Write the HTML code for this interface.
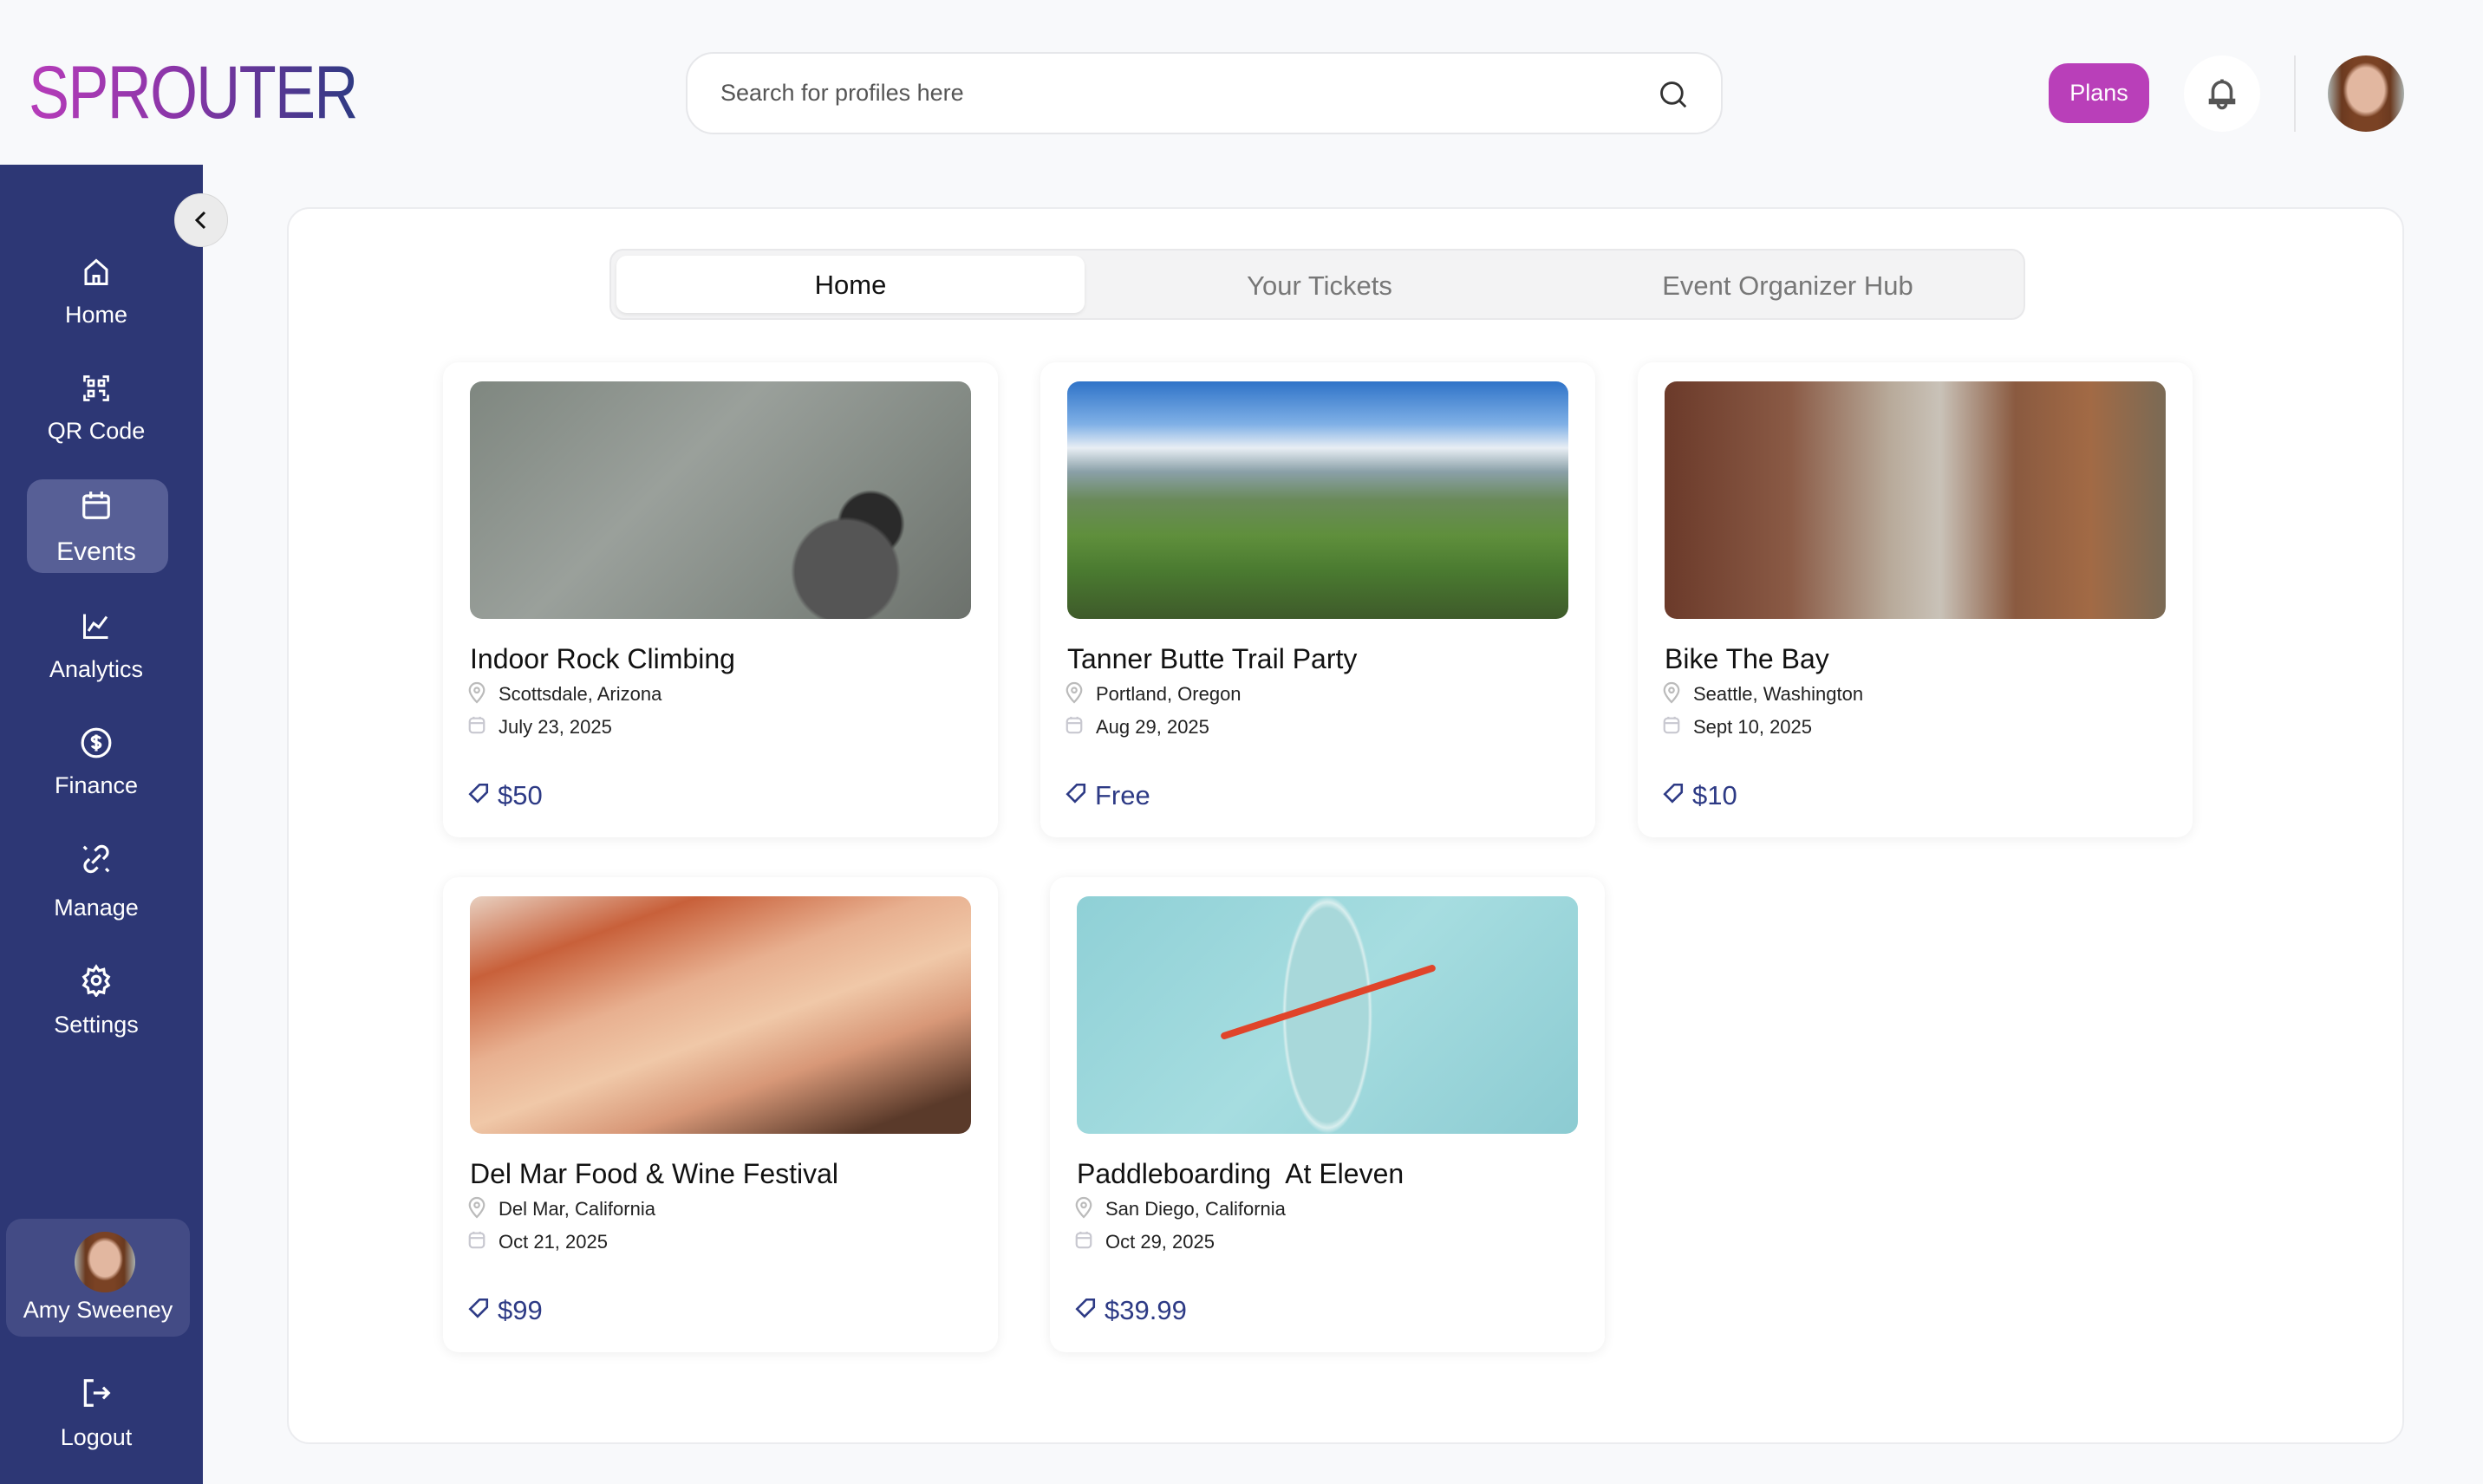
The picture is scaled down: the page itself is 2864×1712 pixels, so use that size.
<!DOCTYPE html>
<html><head><meta charset="utf-8"><style>
*{box-sizing:border-box;margin:0;padding:0}
body{width:2864px;height:1712px;background:#f8f9fb;font-family:"Liberation Sans",sans-serif;position:relative;overflow:hidden;color:#111}
.abs{position:absolute}
.logo{left:33px;top:64px;font-size:86px;font-weight:400;letter-spacing:-2px;transform:scaleX(0.82);transform-origin:left;background:linear-gradient(90deg,#b63cb9,#8a35a8 45%,#2e3a82);-webkit-background-clip:text;color:transparent;line-height:1}
.search{left:791px;top:60px;width:1196px;height:95px;background:#fff;border:2px solid #e6e7ea;border-radius:32px}
.search span{position:absolute;left:38px;top:30px;font-size:27px;color:#555}
.plans{left:2363px;top:73px;width:116px;height:69px;background:#b93fb9;border-radius:22px;color:#fff;font-size:27px;text-align:center;line-height:69px}
.bell{left:2519px;top:64px;width:88px;height:88px;border-radius:50%;background:#fff}
.avatar{border-radius:50%;background:radial-gradient(ellipse 30% 36% at 50% 45%,#e2b7a0 0 80%,transparent 100%),linear-gradient(90deg,#a9b0ad 0,#6b3a20 18%,#7a4224 35%,#7a4224 65%,#6b3a20 82%,#a9b0ad)}
.side{left:0;top:190px;width:234px;height:1522px;background:#2d3775}
.nav{position:absolute;left:0;width:222px;text-align:center;color:#fff;font-size:27px}
.nav svg{display:block;margin:0 auto}
.collapse{left:201px;top:223px;width:62px;height:62px;border-radius:50%;background:#ebebeb;border:1px solid #d8d8d8}
.panel{left:331px;top:239px;width:2442px;height:1427px;background:#fff;border:2px solid #ebecef;border-radius:26px}
.tabs{left:703px;top:287px;width:1633px;height:82px;background:#f3f3f4;border:2px solid #e8e8ea;border-radius:16px}
.tab{position:absolute;top:0;width:540px;height:80px;line-height:82px;text-align:center;font-size:31px;color:#777}
.tabon{left:6px;top:6px;height:66px;line-height:68px;background:#fff;border-radius:12px;color:#111;box-shadow:0 2px 4px rgba(0,0,0,.08)}
.card{position:absolute;width:640px;height:548px;background:#fff;border-radius:18px;box-shadow:0 2px 14px rgba(0,0,0,.07)}
.img{position:absolute;left:31px;top:22px;width:578px;height:274px;border-radius:14px;overflow:hidden}
.t{position:absolute;left:31px;top:324px;font-size:32px;color:#111}
.m{position:absolute;left:64px;font-size:22px;color:#222}
.ic{position:absolute;left:28px}
.p{position:absolute;left:63px;top:482px;font-size:31px;color:#2d3a85}
</style></head><body>
<div class="abs logo">SPROUTER</div>
<div class="abs search"><span>Search for profiles here</span>
<svg class="abs" style="left:1118px;top:28px" width="38" height="38" viewBox="0 0 24 24" fill="none" stroke="#333" stroke-width="1.8"><circle cx="11" cy="11" r="7.5"/><path d="M16.5 16.5L21 21"/></svg></div>
<div class="abs plans">Plans</div>
<div class="abs bell"><svg class="abs" style="left:26px;top:24px" width="36" height="40" viewBox="0 0 24 26" fill="none" stroke="#555" stroke-width="2.4"><path d="M12 2v2M5 18V11a7 7 0 0 1 14 0v7M3 18h18v2H3zM9 21a3 3 0 0 0 6 0"/></svg></div>
<div class="abs" style="left:2646px;top:64px;width:2px;height:88px;background:#e4e4e6"></div>
<div class="abs avatar" style="left:2685px;top:64px;width:88px;height:88px"></div>

<div class="abs side">
<div class="nav" style="top:106px"><svg width="36" height="36" viewBox="0 0 24 24" fill="none" stroke="#fff" stroke-width="2"><path d="M4 21V10l8-7 8 7v11zM10 21v-6h4v6"/></svg><div style="margin-top:16px">Home</div></div>
<div class="nav" style="top:240px"><svg width="36" height="36" viewBox="0 0 24 24" fill="none" stroke="#fff" stroke-width="1.8"><path d="M3 7V3h4M17 3h4v4M21 17v4h-4M7 21H3v-4"/><rect x="6" y="6" width="4" height="4"/><rect x="14" y="6" width="4" height="4"/><rect x="6" y="14" width="4" height="4"/><path d="M14 14h4v4"/></svg><div style="margin-top:16px">QR Code</div></div>
<div class="abs" style="left:31px;top:363px;width:163px;height:108px;background:#575f96;border-radius:18px"></div>
<div class="nav" style="top:374px"><svg width="38" height="38" viewBox="0 0 24 24" fill="none" stroke="#fff" stroke-width="2"><rect x="3" y="5" width="18" height="16" rx="2"/><path d="M3 10h18M8 2v5M16 2v5"/></svg><div style="margin-top:18px;font-size:30px">Events</div></div>
<div class="nav" style="top:514px"><svg width="36" height="36" viewBox="0 0 24 24" fill="none" stroke="#fff" stroke-width="2"><path d="M3 3v18h18M6 16l4-6 4 3 6-8"/></svg><div style="margin-top:17px">Analytics</div></div>
<div class="nav" style="top:648px"><svg width="38" height="38" viewBox="0 0 24 24" fill="none" stroke="#fff" stroke-width="2"><circle cx="12" cy="12" r="10"/><path d="M15 9a3 2 0 0 0-3-1.5c-2 0-3 1-3 2s1 1.5 3 2 3 1 3 2-1 2-3 2a3 2 0 0 1-3-1.5M12 6v12"/></svg><div style="margin-top:15px">Finance</div></div>
<div class="nav" style="top:782px"><svg width="38" height="38" viewBox="0 0 24 24" fill="none" stroke="#fff" stroke-width="2"><path d="M9 15l6-6M11 6l2-2a4 4 0 0 1 6 6l-2 2M13 18l-2 2a4 4 0 0 1-6-6l2-2M3 3l2 2M19 19l2 2"/></svg><div style="margin-top:22px">Manage</div></div>
<div class="nav" style="top:922px"><svg width="38" height="38" viewBox="0 0 24 24" fill="none" stroke="#fff" stroke-width="2"><circle cx="12" cy="12" r="3"/><path d="M12 2l2 3 3.5-1 .5 3.5 3 2-2 3 2 3-3 2-.5 3.5-3.5-1-2 3-2-3-3.5 1-.5-3.5-3-2 2-3-2-3 3-2 .5-3.5 3.5 1z"/></svg><div style="margin-top:17px">Settings</div></div>
<div class="abs" style="left:7px;top:1216px;width:212px;height:136px;background:#434b85;border-radius:18px"></div>
<div class="abs avatar" style="left:86px;top:1231px;width:70px;height:70px"></div>
<div class="nav" style="top:1306px;left:2px;width:222px">Amy Sweeney</div>
<div class="nav" style="top:1398px"><svg width="38" height="38" viewBox="0 0 24 24" fill="none" stroke="#fff" stroke-width="2"><path d="M10 3H4v18h6M10 12h11M17 8l4 4-4 4"/></svg><div style="margin-top:17px">Logout</div></div>
</div>
<div class="abs collapse"><svg class="abs" style="left:18px;top:17px" width="24" height="26" viewBox="0 0 24 24" fill="none" stroke="#111" stroke-width="3"><path d="M16 3l-9 9 9 9"/></svg></div>

<div class="abs panel"></div>
<div class="abs tabs">
<div class="tab tabon">Home</div>
<div class="tab" style="left:547px">Your Tickets</div>
<div class="tab" style="left:1087px">Event Organizer Hub</div>
</div>

<div class="card" style="left:511px;top:418px">
<div class="img" style="background:radial-gradient(circle at 75% 80%,#555 0 12%,transparent 13%),radial-gradient(circle at 80% 60%,#2a2a2a 0 7%,transparent 8%),linear-gradient(135deg,#7f8780,#9aa09b 40%,#838a84 70%,#6c716c)"></div>
<div class="t">Indoor Rock Climbing</div>
<svg class="ic" style="top:368px" width="22" height="26" viewBox="0 0 24 28" fill="none" stroke="#bbb" stroke-width="2.4"><path d="M12 26s-9-9-9-15a9 9 0 0 1 18 0c0 6-9 15-9 15z"/><circle cx="12" cy="11" r="3"/></svg><div class="m" style="top:370px">Scottsdale, Arizona</div>
<svg class="ic" style="top:406px" width="22" height="24" viewBox="0 0 24 24" fill="none" stroke="#c8c8d0" stroke-width="2.4"><rect x="3" y="4" width="18" height="18" rx="4"/><path d="M3 10h18M8 2v3M16 2v3"/></svg><div class="m" style="top:408px">July 23, 2025</div>
<svg class="ic" style="top:484px" width="26" height="26" viewBox="0 0 24 24" fill="none" stroke="#2d3a85" stroke-width="2.4"><path d="M21 3h-8L3 13l8 8 10-10zM16 8h.01"/></svg><div class="p">$50</div>
</div>

<div class="card" style="left:1200px;top:418px">
<div class="img" style="background:linear-gradient(180deg,#2f73c8 0,#7fb0e6 18%,#e8eef4 28%,#8aa0a8 38%,#6a8a5a 50%,#5f8f3c 65%,#4a7a30 80%,#3e5a2a)"></div>
<div class="t">Tanner Butte Trail Party</div>
<svg class="ic" style="top:368px" width="22" height="26" viewBox="0 0 24 28" fill="none" stroke="#bbb" stroke-width="2.4"><path d="M12 26s-9-9-9-15a9 9 0 0 1 18 0c0 6-9 15-9 15z"/><circle cx="12" cy="11" r="3"/></svg><div class="m" style="top:370px">Portland, Oregon</div>
<svg class="ic" style="top:406px" width="22" height="24" viewBox="0 0 24 24" fill="none" stroke="#c8c8d0" stroke-width="2.4"><rect x="3" y="4" width="18" height="18" rx="4"/><path d="M3 10h18M8 2v3M16 2v3"/></svg><div class="m" style="top:408px">Aug 29, 2025</div>
<svg class="ic" style="top:484px" width="26" height="26" viewBox="0 0 24 24" fill="none" stroke="#2d3a85" stroke-width="2.4"><path d="M21 3h-8L3 13l8 8 10-10zM16 8h.01"/></svg><div class="p">Free</div>
</div>

<div class="card" style="left:1889px;top:418px">
<div class="img" style="background:linear-gradient(90deg,#6b3a2a 0,#8a5a45 25%,#b8aa9a 45%,#c9c2b8 55%,#8a5a40 70%,#a26a45 85%,#7a6a55)"></div>
<div class="t">Bike The Bay</div>
<svg class="ic" style="top:368px" width="22" height="26" viewBox="0 0 24 28" fill="none" stroke="#bbb" stroke-width="2.4"><path d="M12 26s-9-9-9-15a9 9 0 0 1 18 0c0 6-9 15-9 15z"/><circle cx="12" cy="11" r="3"/></svg><div class="m" style="top:370px">Seattle, Washington</div>
<svg class="ic" style="top:406px" width="22" height="24" viewBox="0 0 24 24" fill="none" stroke="#c8c8d0" stroke-width="2.4"><rect x="3" y="4" width="18" height="18" rx="4"/><path d="M3 10h18M8 2v3M16 2v3"/></svg><div class="m" style="top:408px">Sept 10, 2025</div>
<svg class="ic" style="top:484px" width="26" height="26" viewBox="0 0 24 24" fill="none" stroke="#2d3a85" stroke-width="2.4"><path d="M21 3h-8L3 13l8 8 10-10zM16 8h.01"/></svg><div class="p">$10</div>
</div>

<div class="card" style="left:511px;top:1012px">
<div class="img" style="background:linear-gradient(160deg,#e8d0c0 0,#c8603a 20%,#e8b090 40%,#f0c8a8 55%,#d89878 70%,#5a3a2a 90%)"></div>
<div class="t">Del Mar Food &amp; Wine Festival</div>
<svg class="ic" style="top:368px" width="22" height="26" viewBox="0 0 24 28" fill="none" stroke="#bbb" stroke-width="2.4"><path d="M12 26s-9-9-9-15a9 9 0 0 1 18 0c0 6-9 15-9 15z"/><circle cx="12" cy="11" r="3"/></svg><div class="m" style="top:370px">Del Mar, California</div>
<svg class="ic" style="top:406px" width="22" height="24" viewBox="0 0 24 24" fill="none" stroke="#c8c8d0" stroke-width="2.4"><rect x="3" y="4" width="18" height="18" rx="4"/><path d="M3 10h18M8 2v3M16 2v3"/></svg><div class="m" style="top:408px">Oct 21, 2025</div>
<svg class="ic" style="top:484px" width="26" height="26" viewBox="0 0 24 24" fill="none" stroke="#2d3a85" stroke-width="2.4"><path d="M21 3h-8L3 13l8 8 10-10zM16 8h.01"/></svg><div class="p">$99</div>
</div>

<div class="card" style="left:1211px;top:1012px">
<div class="img" style="background:radial-gradient(ellipse 9% 50% at 50% 50%,#a8d8da 0 90%,#d8eeee 95%,transparent 100%),linear-gradient(135deg,#8fd0d6,#a6dde0 50%,#8ccbd2)"><div class="abs" style="left:160px;top:118px;width:260px;height:8px;background:#e0442a;transform:rotate(-18deg);border-radius:4px"></div></div>
<div class="t">Paddleboarding&nbsp; At Eleven</div>
<svg class="ic" style="top:368px" width="22" height="26" viewBox="0 0 24 28" fill="none" stroke="#bbb" stroke-width="2.4"><path d="M12 26s-9-9-9-15a9 9 0 0 1 18 0c0 6-9 15-9 15z"/><circle cx="12" cy="11" r="3"/></svg><div class="m" style="top:370px">San Diego, California</div>
<svg class="ic" style="top:406px" width="22" height="24" viewBox="0 0 24 24" fill="none" stroke="#c8c8d0" stroke-width="2.4"><rect x="3" y="4" width="18" height="18" rx="4"/><path d="M3 10h18M8 2v3M16 2v3"/></svg><div class="m" style="top:408px">Oct 29, 2025</div>
<svg class="ic" style="top:484px" width="26" height="26" viewBox="0 0 24 24" fill="none" stroke="#2d3a85" stroke-width="2.4"><path d="M21 3h-8L3 13l8 8 10-10zM16 8h.01"/></svg><div class="p">$39.99</div>
</div>
</body></html>
